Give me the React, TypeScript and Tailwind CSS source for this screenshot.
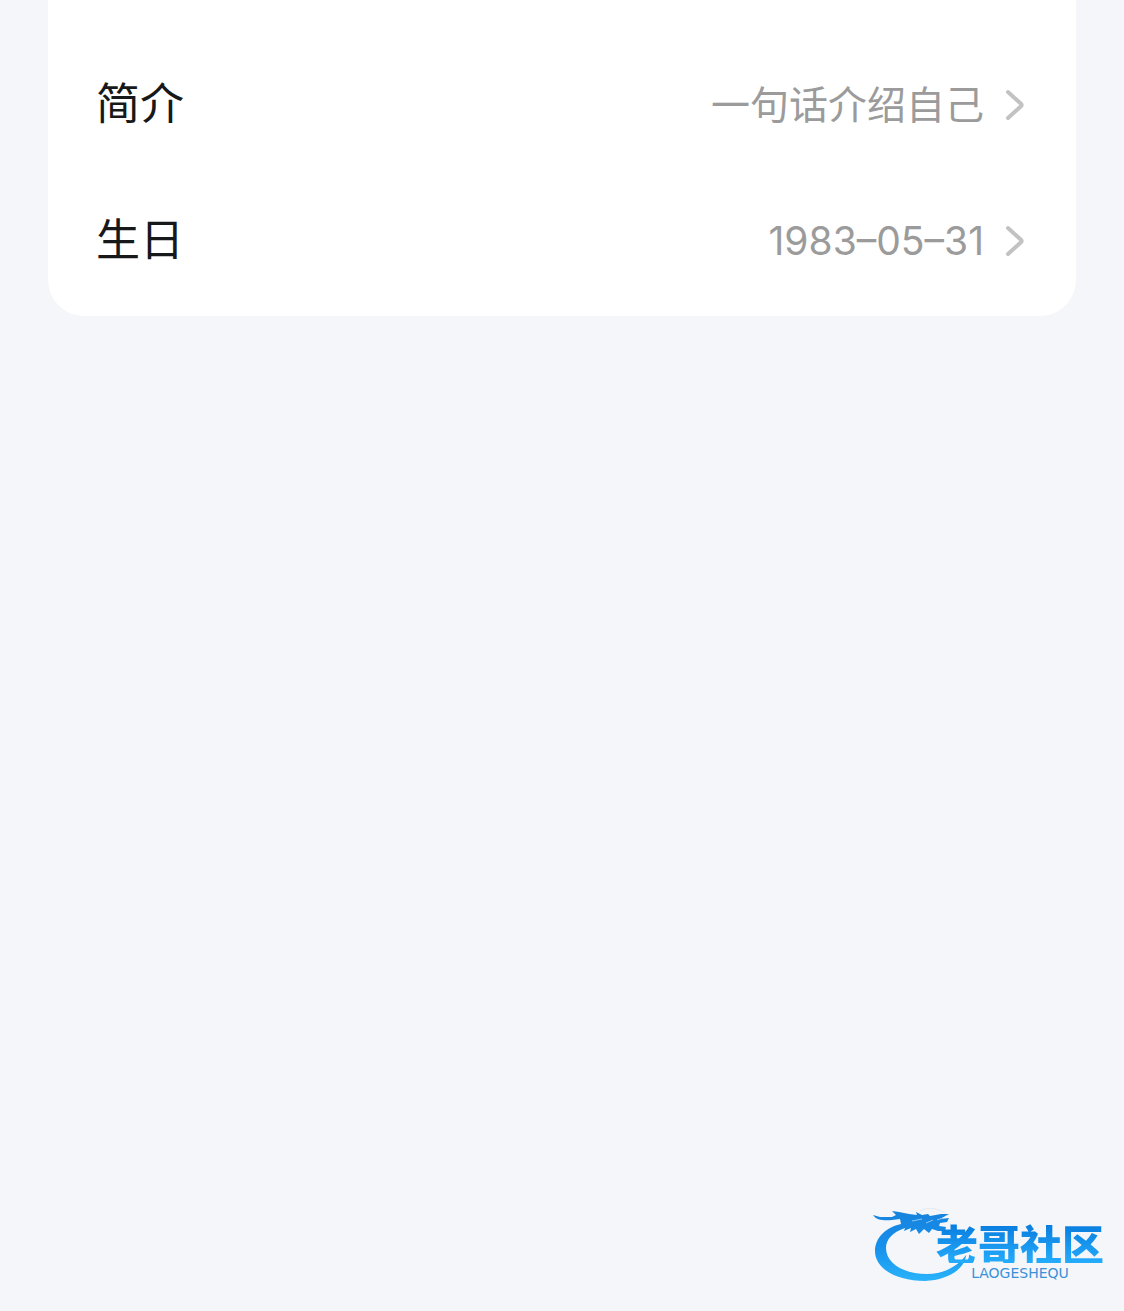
const rows = [
	{ label: "简介", value: "一句话介绍自己" },
	{ label: "生日", value: "1983–05–31" },
];

const ChevronIcon = () => (
	<svg className="h-8 w-5 shrink-0" viewBox="0 0 20 32" fill="none" aria-hidden="true">
		<path
			d="M4 4 L17 15.8 Q18.4 17 17 18.2 L4 30"
			stroke="#c2c2c2"
			strokeWidth="4"
			strokeLinecap="round"
			strokeLinejoin="round"
		/>
	</svg>
);

const DragonMark = () => (
	<svg className="h-20 w-24" viewBox="0 0 96 80" aria-hidden="true">
		<defs>
			<linearGradient id="dragon" x1="0" y1="0" x2="0" y2="1">
				<stop offset="0" stopColor="#1683dd" />
				<stop offset="0.5" stopColor="#168fec" />
				<stop offset="1" stopColor="#29b3fa" />
			</linearGradient>
		</defs>
		<path
			fill="url(#dragon)"
			d="M29 21 C14 24 3 35 3 48 C3 66 25 78 53 78 C76 77 93 66 94 52 C87 62 73 71 55 71 C31 71 14 60 14 45 C14 36 21 29 33 25 L32 28 L39 25 L38 29 L44 26 L47 31 L52 26 L57 30 L60 26 L66 28 L73 28 L74 24 L67 23 L68 20 L75 19 L77 15 L68 16 L77 11 L69 11 L58 13 L56 11 L50 12 L44 9 L45 12 L37 11 L27 9 L20 8 L24 12 L20 14 L8 14 L1 12 C4 17 12 18 20 17 L28 16 Z"
		/>
		<path d="M48 8 Q58 3 67 7 T74 11" fill="none" stroke="#e6e9f2" />
		<path d="M40 18 L50 16 M54 20 L61 17 M65 17 L71 15" fill="none" stroke="#8bc4f3" />
	</svg>
);

const App = () => {
	return (
		<div className="flex min-h-screen flex-col justify-between bg-[#f4f6fa] font-['Inter','Noto_Sans_CJK_SC',sans-serif]">
			<main className="px-12">
				<ul className="rounded-b-[36px] bg-white px-12 pt-9 pb-2">
					{rows.map((row) => (
						<li key={row.label}>
							<button type="button" className="flex h-34 w-full items-center justify-between pr-1">
								<span className="text-[44px] leading-none text-[#171819]">{row.label}</span>
								<span className="flex items-center gap-5">
									<span className="text-[39px] leading-none text-[#9b9b9b]">{row.value}</span>
									<ChevronIcon />
								</span>
							</button>
						</li>
					))}
				</ul>
			</main>

			<footer className="flex justify-end px-5 pb-7">
				<a href="/" className="relative block w-58">
					<DragonMark />
					<span className="absolute right-0 bottom-1 flex flex-col items-center gap-1">
						<span className="bg-linear-to-b from-[#087bdd] to-[#25acfb] bg-clip-text font-['Noto_Sans_CJK_SC',sans-serif] text-[42px] leading-10 font-black text-transparent">
							老哥社区
						</span>
						<span className="font-['DejaVu_Sans',sans-serif] text-[14px] leading-3 text-[#3a91d8]">
							LAOGESHEQU
						</span>
					</span>
				</a>
			</footer>
		</div>
	);
};

export default App;
